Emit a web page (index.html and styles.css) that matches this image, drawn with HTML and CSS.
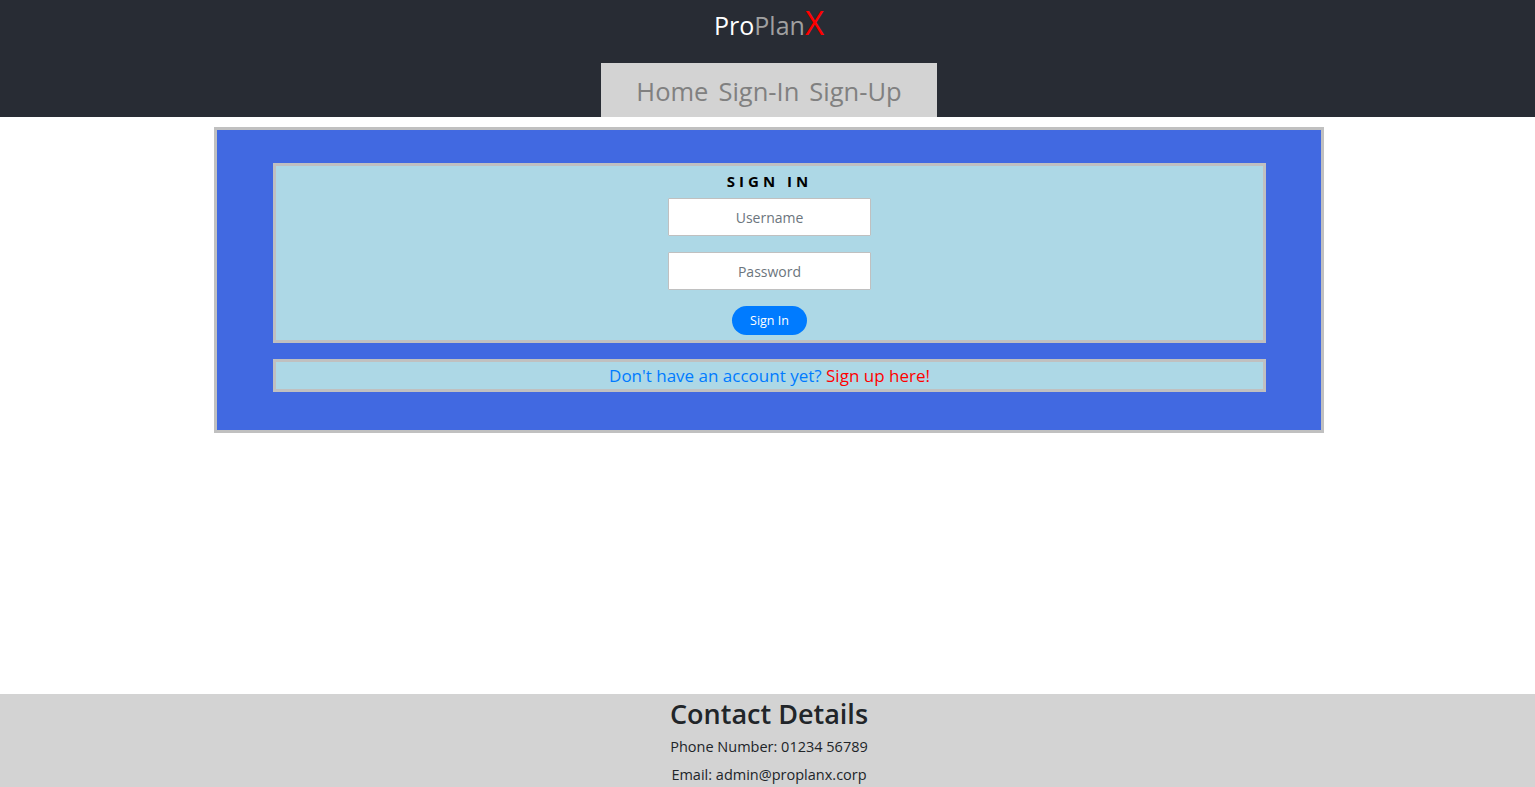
FILE: index.html
```html
<!DOCTYPE html>
<html>
<head>
<meta charset="utf-8">
<title>ProPlanX</title>
<link rel="stylesheet" href="styles.css">
</head>
<body>
<div class="page">
  <header class="header">
    <h1 class="brand"><span class="pro">Pro</span><span class="plan">Plan</span><span class="x">X</span></h1>
    <nav class="nav">
      <a href="#">Home</a>
      <a href="#">Sign-In</a>
      <a href="#">Sign-Up</a>
    </nav>
  </header>
  <main class="main">
    <div class="container">
      <form class="panel signin">
        <h2 class="title">SIGN IN</h2>
        <input class="field" type="text" placeholder="Username">
        <input class="field" type="password" placeholder="Password">
        <button class="btn" type="button">Sign In</button>
      </form>
      <div class="panel signup">
        <span class="q">Don't have an account yet?</span> <a class="link" href="#">Sign up here!</a>
      </div>
    </div>
  </main>
  <footer class="footer">
    <h3 class="ftitle">Contact Details</h3>
    <p class="fline">Phone Number: 01234 56789</p>
    <p class="fline">Email: admin@proplanx.corp</p>
  </footer>
</div>
</body>
</html>
```
FILE: styles.css
```css
* { box-sizing: border-box; }
html, body { margin: 0; padding: 0; height: 100%; }
body {
  font-family: "Open Sans", "Noto Sans", sans-serif;
  color: #212529;
  background: #fff;
}
.page {
  min-height: 787px;
  display: flex;
  flex-direction: column;
}
.header {
  background: #282c34;
  height: 117px;
  display: flex;
  flex-direction: column;
  align-items: center;
  padding-left: 3px;
}
.brand {
  margin: 6px 0 0;
  height: 57px;
  font-weight: 400;
  font-size: 25px;
  line-height: 34px;
}
.pro { color: #fff; }
.plan { color: #a0a0a0; }
.x { color: #ff0000; font-size: 33px; }
.nav {
  background: #d3d3d3;
  width: 336px;
  height: 54px;
  display: flex;
  justify-content: center;
  align-items: center;
  gap: 10px;
  padding-top: 2px;
}
.nav a {
  color: #808080;
  text-decoration: none;
  font-size: 25.5px;
}
.main { flex: 1; padding: 10px 0 0 3px; }
.container {
  width: 1110px;
  margin: 0 auto;
  background: #4169e1;
  border: 3px solid #c0c0c0;
  padding: 33px 55px 38px 56px;
  display: flex;
  flex-direction: column;
  gap: 16px;
}
.panel {
  background: #add8e6;
  border: 3px solid #c0c0c0;
  margin: 0;
}
.signin {
  height: 180px;
  display: flex;
  flex-direction: column;
  align-items: center;
  padding-top: 4px;
}
.title {
  margin: 0;
  font-size: 15px;
  font-weight: 700;
  letter-spacing: 4px;
  line-height: 22px;
  color: #000;
  margin-bottom: 6px;
}
.field {
  width: 203px;
  height: 38px;
  border: 1px solid #c0c0c0;
  border-radius: 1px;
  text-align: center;
  font-family: inherit;
  font-size: 14px;
  color: #495057;
  margin-bottom: 16px;
  background: #fff;
}
.field::placeholder { color: #6c757d; }
.btn {
  width: 75px;
  height: 29px;
  border: none;
  border-radius: 15px;
  background: #007bff;
  color: #fff;
  font-family: inherit;
  font-size: 12.5px;
  padding: 0;
}
.signup {
  height: 33px;
  text-align: center;
  font-size: 17px;
  line-height: 27px;
}
.q { color: #007bff; }
.link { color: #ff0000; text-decoration: none; }
.footer {
  background: #d3d3d3;
  height: 93px;
  text-align: center;
  padding: 3px 0 0 3px;
}
.ftitle {
  margin: 0 0 2px;
  font-size: 27px;
  font-weight: 600;
  line-height: 34px;
  color: #212529;
}
.fline {
  margin: 0;
  font-size: 14.5px;
  line-height: 28px;
}
```
